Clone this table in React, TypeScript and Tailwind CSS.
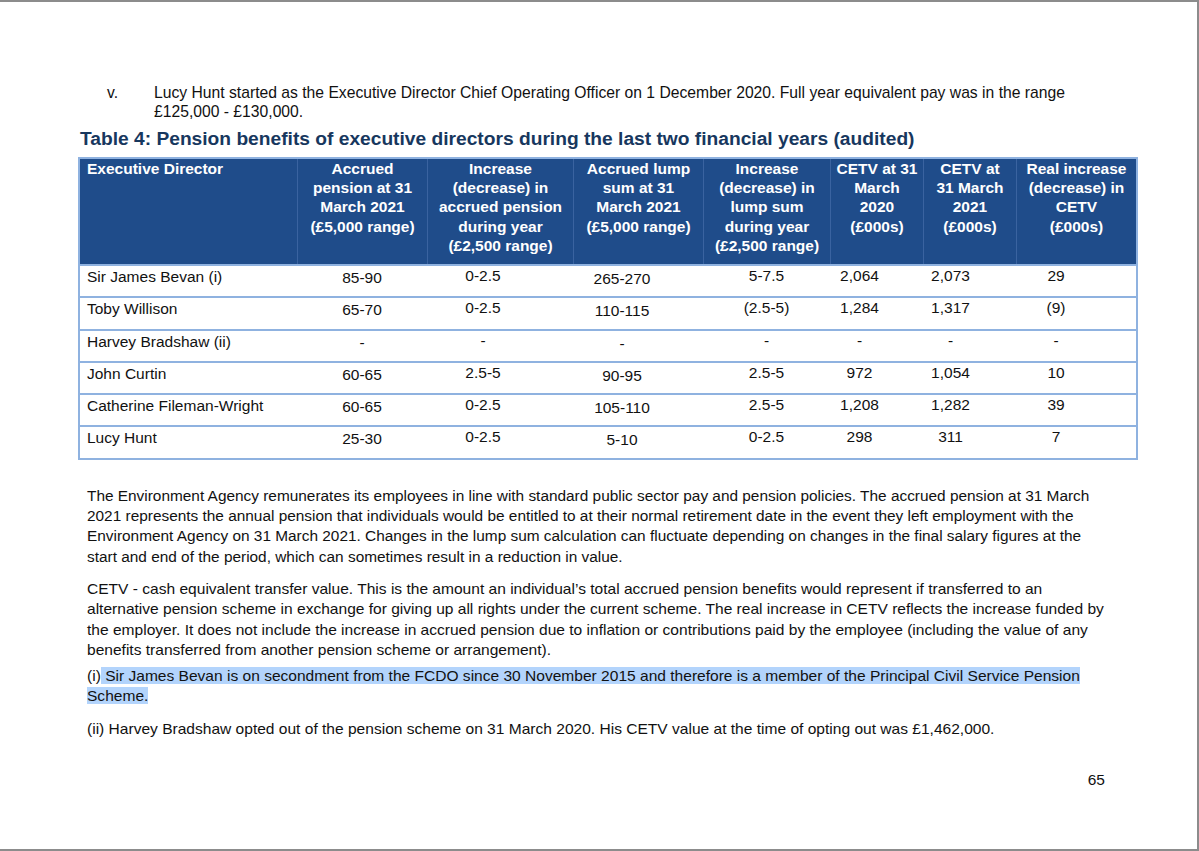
import React from "react";

const cols = ["w-[217px]", "w-[130px]", "w-[146px]", "w-[130px]", "w-[127px]", "w-[93px]", "w-[93px]", "w-[120px]"];

const headers: string[][] = [
  ["Executive Director"],
  ["Accrued", "pension at 31", "March 2021", "(£5,000 range)"],
  ["Increase", "(decrease) in", "accrued pension", "during year", "(£2,500 range)"],
  ["Accrued lump", "sum at 31", "March 2021", "(£5,000 range)"],
  ["Increase", "(decrease) in", "lump sum", "during year", "(£2,500 range)"],
  ["CETV at 31", "March", "2020", "(£000s)"],
  ["CETV at", "31 March", "2021", "(£000s)"],
  ["Real increase", "(decrease) in", "CETV", "(£000s)"],
];

const rows: string[][] = [
  ["Sir James Bevan (i)", "85-90", "0-2.5", "265-270", "5-7.5", "2,064", "2,073", "29"],
  ["Toby Willison", "65-70", "0-2.5", "110-115", "(2.5-5)", "1,284", "1,317", "(9)"],
  ["Harvey Bradshaw (ii)", "-", "-", "-", "-", "-", "-", "-"],
  ["John Curtin", "60-65", "2.5-5", "90-95", "2.5-5", "972", "1,054", "10"],
  ["Catherine Fileman-Wright", "60-65", "0-2.5", "105-110", "2.5-5", "1,208", "1,282", "39"],
  ["Lucy Hunt", "25-30", "0-2.5", "5-10", "0-2.5", "298", "311", "7"],
];

const cellStyle = [
  "pl-[7px] text-left pt-[1px]",
  "text-center pt-[2px]",
  "text-center pr-[34px] pt-[0px]",
  "text-center pr-[32px] pt-[3px]",
  "text-center pt-[0px]",
  "text-center pr-[34px] pt-[0px]",
  "text-center pr-[38px] pt-[0px]",
  "text-center pr-[40px] pt-[0px]",
];

export default function App() {
  return (
    <div className="w-[1199px] h-[851px] bg-white border-t-2 border-r-2 border-b-2 border-[#8c8c8c] text-[#111] font-['Liberation_Sans',Arial,sans-serif] overflow-hidden">
      <div className="pt-[81px] pl-[107px] flex text-[15.7px] leading-[19px]">
        <span className="w-[47px]">v.</span>
        <div>
          <div className="whitespace-nowrap">
            Lucy Hunt started as the Executive Director Chief Operating Officer on 1 December 2020. Full year equivalent pay was in the range
          </div>
          <div className="whitespace-nowrap">£125,000 - £130,000.</div>
        </div>
      </div>

      <div className="mt-[7px] pl-[80px] text-[19.2px] leading-[22px] font-bold text-[#17375e] whitespace-nowrap">
        Table 4: Pension benefits of executive directors during the last two financial years (audited)
      </div>

      <div className="mt-[7px] ml-[78px] w-[1060px] border-2 border-[#8fb2e0] text-[15.5px]">
        <div className="flex h-[105px] bg-[#1f4c8a] text-white font-bold leading-[19.2px]">
          {headers.map((lines, i) => (
            <div
              key={i}
              className={`${cols[i]} ${i === 0 ? "pl-[7px] text-left" : "text-center"} ${i > 0 ? "border-l border-[#3a63a0]" : ""} shrink-0`}
            >
              {lines.map((l, j) => (
                <div key={j} className="whitespace-nowrap">
                  {l}
                </div>
              ))}
            </div>
          ))}
        </div>
        {rows.map((r, ri) => (
          <div key={ri} className="flex h-[32.3px] border-t-2 border-[#8fb2e0] leading-[20px]">
            {r.map((v, ci) => (
              <div key={ci} className={`${cols[ci]} ${cellStyle[ci]} shrink-0 whitespace-nowrap`}>
                {v}
              </div>
            ))}
          </div>
        ))}
      </div>

      <div className="pl-[87px] text-[15.55px] leading-[20.3px]">
        <div className="mt-[26px] text-[15.4px]">
          <div className="whitespace-nowrap">
            The Environment Agency remunerates its employees in line with standard public sector pay and pension policies. The accrued pension at 31 March
          </div>
          <div className="whitespace-nowrap">
            2021 represents the annual pension that individuals would be entitled to at their normal retirement date in the event they left employment with the
          </div>
          <div className="whitespace-nowrap">
            Environment Agency on 31 March 2021. Changes in the lump sum calculation can fluctuate depending on changes in the final salary figures at the
          </div>
          <div className="whitespace-nowrap">start and end of the period, which can sometimes result in a reduction in value.</div>
        </div>
        <div className="mt-[12px]">
          <div className="whitespace-nowrap">
            CETV - cash equivalent transfer value. This is the amount an individual’s total accrued pension benefits would represent if transferred to an
          </div>
          <div className="whitespace-nowrap">
            alternative pension scheme in exchange for giving up all rights under the current scheme. The real increase in CETV reflects the increase funded by
          </div>
          <div className="whitespace-nowrap">
            the employer. It does not include the increase in accrued pension due to inflation or contributions paid by the employee (including the value of any
          </div>
          <div className="whitespace-nowrap">benefits transferred from another pension scheme or arrangement).</div>
        </div>
        <div className="mt-[6px]">
          <div className="whitespace-nowrap">
            (i)
            <span className="bg-[#b3d4fc]">
              {" "}Sir James Bevan is on secondment from the FCDO since 30 November 2015 and therefore is a member of the Principal Civil Service Pension
            </span>
          </div>
          <div className="whitespace-nowrap">
            <span className="bg-[#b3d4fc]">Scheme.</span>
          </div>
        </div>
        <div className="mt-[12px]">
          <div className="whitespace-nowrap">
            (ii) Harvey Bradshaw opted out of the pension scheme on 31 March 2020. His CETV value at the time of opting out was £1,462,000.
          </div>
        </div>
      </div>

      <div className="mt-[31px] flex justify-end pr-[92px] text-[15.5px] leading-[20px]">65</div>
    </div>
  );
}
